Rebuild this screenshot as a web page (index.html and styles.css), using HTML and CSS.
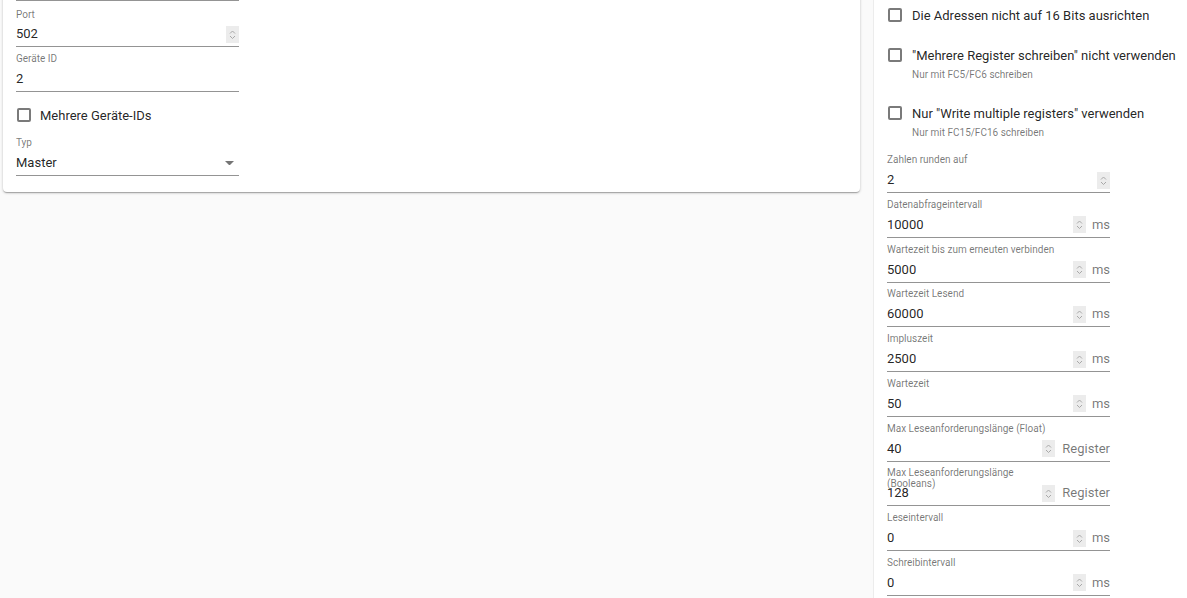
FILE: index.html
```html
<!DOCTYPE html>
<html lang="de">
<head>
<meta charset="utf-8">
<title>Modbus</title>
<link rel="stylesheet" href="styles.css">
</head>
<body>
<div class="page">
  <div class="card">
    <div class="prev-line"></div>
    <div class="field first">
      <div class="label">Port</div>
      <div class="control"><span class="value">502</span><svg class="spin" viewBox="0 0 13 17" width="13" height="17"><rect width="13" height="17" fill="#ececec"/><path d="M4 7.5 L6.5 5 L9 7.5 M4 10 L6.5 12.5 L9 10" fill="none" stroke="#a8a8a8" stroke-width="1"/></svg></div>
    </div>
    <div class="field">
      <div class="label">Geräte ID</div>
      <div class="control"><span class="value">2</span></div>
    </div>
    <div class="check left-check">
      <span class="box"></span><span class="check-text">Mehrere Geräte-IDs</span>
    </div>
    <div class="field last">
      <div class="label">Typ</div>
      <div class="control"><span class="value">Master</span><svg class="arrow" viewBox="0 0 10 5" width="9" height="4.5"><polygon points="0,0 10,0 5,5" fill="#757575"/></svg></div>
    </div>
  </div>

  <aside class="panel">
    <div class="check-item first-item">
      <div class="check"><span class="box"></span><span class="check-text">Die Adressen nicht auf 16 Bits ausrichten</span></div>
    </div>
    <div class="check-item with-help">
      <div class="check"><span class="box"></span><span class="check-text">"Mehrere Register schreiben" nicht verwenden</span></div>
      <div class="help">Nur mit FC5/FC6 schreiben</div>
    </div>
    <div class="check-item with-help last-item">
      <div class="check"><span class="box"></span><span class="check-text">Nur "Write multiple registers" verwenden</span></div>
      <div class="help">Nur mit FC15/FC16 schreiben</div>
    </div>

    <div class="field">
      <div class="label">Zahlen runden auf</div>
      <div class="control"><span class="value">2</span><svg class="spin" viewBox="0 0 13 17" width="13" height="17"><rect width="13" height="17" fill="#ececec"/><path d="M4 7.5 L6.5 5 L9 7.5 M4 10 L6.5 12.5 L9 10" fill="none" stroke="#a8a8a8" stroke-width="1"/></svg></div>
    </div>
    <div class="field">
      <div class="label">Datenabfrageintervall</div>
      <div class="control"><span class="value">10000</span><svg class="spin" viewBox="0 0 13 17" width="13" height="17"><rect width="13" height="17" fill="#ececec"/><path d="M4 7.5 L6.5 5 L9 7.5 M4 10 L6.5 12.5 L9 10" fill="none" stroke="#a8a8a8" stroke-width="1"/></svg><span class="unit">ms</span></div>
    </div>
    <div class="field">
      <div class="label">Wartezeit bis zum erneuten verbinden</div>
      <div class="control"><span class="value">5000</span><svg class="spin" viewBox="0 0 13 17" width="13" height="17"><rect width="13" height="17" fill="#ececec"/><path d="M4 7.5 L6.5 5 L9 7.5 M4 10 L6.5 12.5 L9 10" fill="none" stroke="#a8a8a8" stroke-width="1"/></svg><span class="unit">ms</span></div>
    </div>
    <div class="field">
      <div class="label">Wartezeit Lesend</div>
      <div class="control"><span class="value">60000</span><svg class="spin" viewBox="0 0 13 17" width="13" height="17"><rect width="13" height="17" fill="#ececec"/><path d="M4 7.5 L6.5 5 L9 7.5 M4 10 L6.5 12.5 L9 10" fill="none" stroke="#a8a8a8" stroke-width="1"/></svg><span class="unit">ms</span></div>
    </div>
    <div class="field">
      <div class="label">Impluszeit</div>
      <div class="control"><span class="value">2500</span><svg class="spin" viewBox="0 0 13 17" width="13" height="17"><rect width="13" height="17" fill="#ececec"/><path d="M4 7.5 L6.5 5 L9 7.5 M4 10 L6.5 12.5 L9 10" fill="none" stroke="#a8a8a8" stroke-width="1"/></svg><span class="unit">ms</span></div>
    </div>
    <div class="field">
      <div class="label">Wartezeit</div>
      <div class="control"><span class="value">50</span><svg class="spin" viewBox="0 0 13 17" width="13" height="17"><rect width="13" height="17" fill="#ececec"/><path d="M4 7.5 L6.5 5 L9 7.5 M4 10 L6.5 12.5 L9 10" fill="none" stroke="#a8a8a8" stroke-width="1"/></svg><span class="unit">ms</span></div>
    </div>
    <div class="field">
      <div class="label narrow">Max Leseanforderungslänge (Float)</div>
      <div class="control"><span class="value">40</span><svg class="spin" viewBox="0 0 13 17" width="13" height="17"><rect width="13" height="17" fill="#ececec"/><path d="M4 7.5 L6.5 5 L9 7.5 M4 10 L6.5 12.5 L9 10" fill="none" stroke="#a8a8a8" stroke-width="1"/></svg><span class="unit reg">Register</span></div>
    </div>
    <div class="field">
      <div class="label narrow">Max Leseanforderungslänge (Booleans)</div>
      <div class="control"><span class="value">128</span><svg class="spin" viewBox="0 0 13 17" width="13" height="17"><rect width="13" height="17" fill="#ececec"/><path d="M4 7.5 L6.5 5 L9 7.5 M4 10 L6.5 12.5 L9 10" fill="none" stroke="#a8a8a8" stroke-width="1"/></svg><span class="unit reg">Register</span></div>
    </div>
    <div class="field">
      <div class="label">Leseintervall</div>
      <div class="control"><span class="value">0</span><svg class="spin" viewBox="0 0 13 17" width="13" height="17"><rect width="13" height="17" fill="#ececec"/><path d="M4 7.5 L6.5 5 L9 7.5 M4 10 L6.5 12.5 L9 10" fill="none" stroke="#a8a8a8" stroke-width="1"/></svg><span class="unit">ms</span></div>
    </div>
    <div class="field">
      <div class="label">Schreibintervall</div>
      <div class="control"><span class="value">0</span><svg class="spin" viewBox="0 0 13 17" width="13" height="17"><rect width="13" height="17" fill="#ececec"/><path d="M4 7.5 L6.5 5 L9 7.5 M4 10 L6.5 12.5 L9 10" fill="none" stroke="#a8a8a8" stroke-width="1"/></svg><span class="unit">ms</span></div>
    </div>
  </aside>
</div>
</body>
</html>
```

FILE: styles.css
```css
html, body {
  margin: 0;
  padding: 0;
  height: 100%;
  overflow: hidden;
  background: #fafafa;
  font-family: Roboto, "Liberation Sans", Arial, sans-serif;
  color: rgba(0, 0, 0, 0.87);
}

.page {
  display: flex;
  align-items: flex-start;
  gap: 13px;
  padding-left: 3px;
}

.card {
  width: 857px;
  margin-top: -20px;
  padding: 0 0 16px 13px;
  box-sizing: border-box;
  background: #fff;
  border-radius: 0 0 4px 4px;
  box-shadow: 0 1px 3px rgba(0, 0, 0, 0.2), 0 1px 1px rgba(0, 0, 0, 0.14), 0 2px 1px -1px rgba(0, 0, 0, 0.12);
}

.prev-line {
  width: 223px;
  height: 20px;
  border-bottom: 1px solid rgba(0, 0, 0, 0.42);
  box-sizing: content-box;
}

.field {
  width: 223px;
  margin-bottom: 5.78px;
}

.card .field {
  margin-bottom: 6px;
}

.card .field.first {
  margin-top: 7px;
}

.card .field.last {
  margin-bottom: 0;
}

.label {
  height: 12px;
  font-size: 10px;
  line-height: 11px;
  color: rgba(0, 0, 0, 0.54);
  white-space: normal;
}

.card .field.first .label {
  padding-top: 1px;
  height: 11px;
}

.label.narrow {
  max-width: 165px;
}

.control {
  display: flex;
  align-items: center;
  height: 20px;
  margin-top: 4px;
  padding-bottom: 2px;
  border-bottom: 1px solid rgba(0, 0, 0, 0.42);
}

.value {
  flex: 1;
  font-size: 13px;
  line-height: 20px;
}

.spin {
  flex: none;
  display: block;
}

.unit {
  margin-left: 6px;
  font-size: 13px;
  line-height: 20px;
  color: rgba(0, 0, 0, 0.54);
}

.unit.reg {
  margin-left: 7px;
}

.arrow {
  flex: none;
  display: block;
  margin-right: 5px;
}

.check {
  display: flex;
  align-items: center;
  height: 30px;
}

.box {
  flex: none;
  width: 14px;
  height: 14px;
  box-sizing: border-box;
  margin-left: 1px;
  margin-right: 10px;
  border: 2px solid #7a7a7a;
  border-radius: 2px;
}

.left-check .box {
  margin-right: 9px;
}

.check-text {
  font-size: 13px;
  white-space: nowrap;
}

.left-check {
  margin: 8px 0 7px;
}

.panel {
  width: 314px;
  min-height: 620px;
  box-sizing: border-box;
  padding-left: 13px;
  background: #fff;
  border-left: 1px solid #ececec;
}

.check-item {
  margin-bottom: 10px;
}

.check-item.with-help {
  margin-bottom: 17px;
}

.check-item.last-item {
  margin-bottom: 15px;
}

.help {
  margin-top: -1px;
  margin-left: 25px;
  font-size: 10px;
  line-height: 12px;
  color: rgba(0, 0, 0, 0.54);
}
```
